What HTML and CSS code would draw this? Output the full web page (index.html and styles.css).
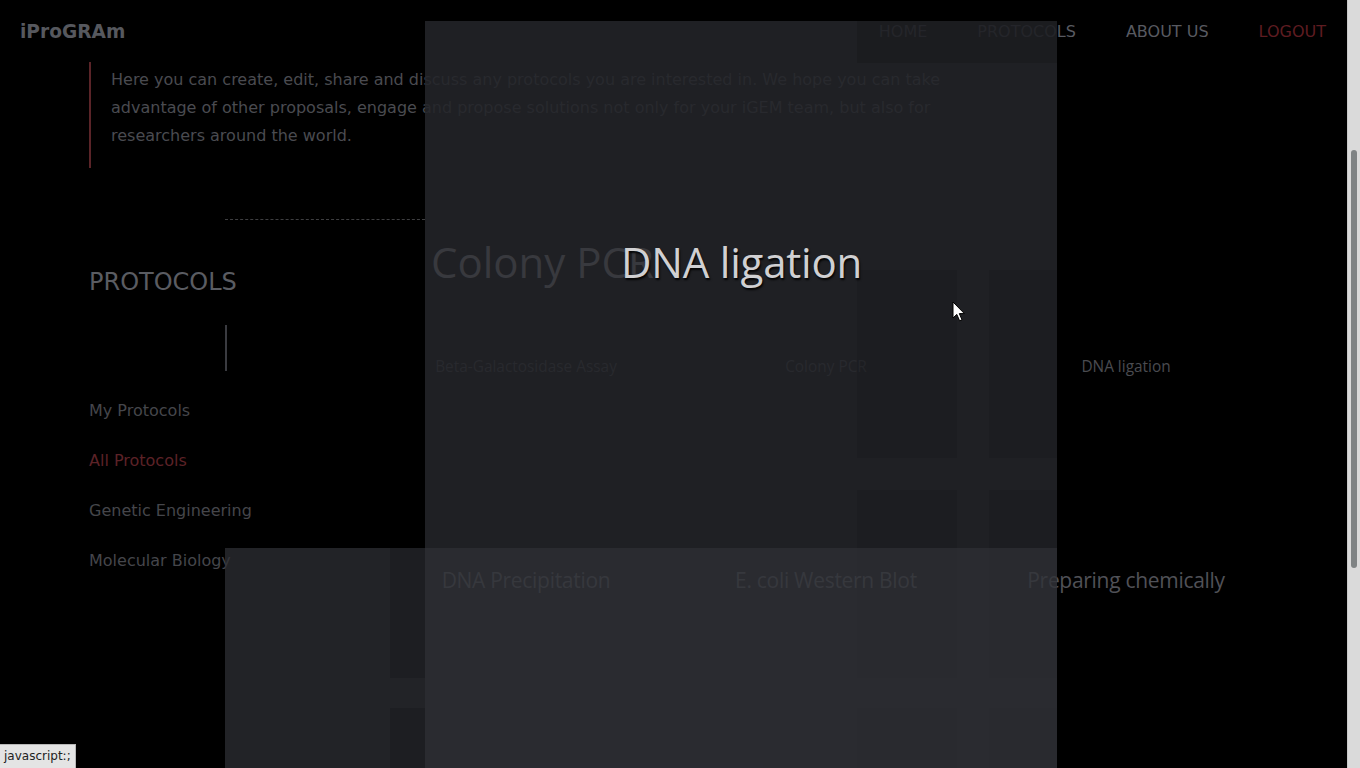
FILE: index.html
```html
<!DOCTYPE html>
<html lang="en">
<head>
<meta charset="utf-8">
<title>iProGRAm - Protocols</title>
<link rel="stylesheet" href="styles.css">
</head>
<body>
<div class="window">
  <div class="page">
    <header class="topbar">
      <div class="logo">iProGRAm</div>
      <nav class="nav">
        <a class="nav-link">HOME</a>
        <a class="nav-link">PROTOCOLS</a>
        <a class="nav-link">ABOUT US</a>
        <a class="nav-link logout">LOGOUT</a>
      </nav>
    </header>

    <blockquote class="intro">Here you can create, edit, share and discuss any protocols you are interested in. We hope you can take advantage of other proposals, engage and propose solutions not only for your iGEM team, but also for researchers around the world.</blockquote>

    <div class="content">
      <aside class="sidebar">
        <h2 class="side-title">PROTOCOLS</h2>
        <ul class="side-list">
          <li class="side-item">My Protocols</li>
          <li class="side-item active">All Protocols</li>
          <li class="side-item">Genetic Engineering</li>
          <li class="side-item">Molecular Biology</li>
        </ul>
      </aside>
      <main class="main">
        <div class="dash"></div>
        <div class="main-body">
          <div class="vline"></div>
          <div class="grid">
            <div class="card"><span class="card-title">Beta-Galactosidase Assay</span></div>
            <div class="card"><span class="card-title">Colony PCR</span></div>
            <div class="card"><span class="card-title">DNA ligation</span></div>
            <div class="card"><span class="card-title big">DNA Precipitation</span></div>
            <div class="card"><span class="card-title big">E. coli Western Blot</span></div>
            <div class="card"><span class="card-title big">Preparing chemically</span></div>
            <div class="card"></div>
            <div class="card"></div>
            <div class="card"></div>
          </div>
        </div>
      </main>
    </div>

    <div class="fx">
      <div class="panel panel-a"></div>
      <div class="panel panel-b"></div>
      <div class="shade s1"></div>
      <div class="shade s2"></div>
      <div class="shade s3"></div>
      <div class="shade s4"></div>
      <div class="shade s5"></div>
      <div class="shade s6"></div>
      <div class="panel panel-c"></div>
      <div class="shade s7"></div>
      <div class="shade s8"></div>
      <div class="ghost-title">Colony PCR</div>
      <div class="hero-title">DNA ligation</div>
      <svg class="cursor" width="14" height="22" viewBox="0 0 14 22">
        <path d="M1 1 L1 17 L4.8 13.4 L7.6 19.8 L10 18.8 L7.3 12.6 L12.4 12.6 Z" fill="#ffffff" stroke="#000000" stroke-width="1" stroke-linejoin="round"/>
      </svg>
    </div>

    <div class="status">javascript:;</div>
  </div>
  <div class="scrollbar"><div class="thumb"></div></div>
</div>
</body>
</html>
```

FILE: styles.css
```css
html, body {
  margin: 0;
  padding: 0;
  background: #000;
}

.window {
  display: flex;
  width: 1360px;
  height: 768px;
  overflow: hidden;
}

.page {
  position: relative;
  width: 1347px;
  height: 768px;
  overflow: hidden;
  background: #000;
  font-family: "DejaVu Sans", Verdana, sans-serif;
  color: #4a4b50;
}

/* header */
.topbar {
  height: 62px;
  display: flex;
  align-items: center;
  justify-content: space-between;
  padding: 0 21px 0 20px;
}

.logo {
  font-weight: bold;
  font-size: 18.6px;
  color: #56585e;
}

.nav {
  display: flex;
  gap: 50px;
}

.nav-link {
  font-size: 16px;
  color: #585a61;
  text-decoration: none;
}

.nav-link.logout {
  color: #5e1c21;
}

/* intro */
.intro {
  margin: 0 0 0 89px;
  width: 836px;
  border-left: 2px solid #5a2428;
  padding: 4px 0 18px 20px;
  font-size: 16px;
  line-height: 28px;
  color: #4a4b50;
}

/* content */
.content {
  display: flex;
  margin-top: 51px;
}

.sidebar {
  width: 136px;
  padding-left: 89px;
  flex-shrink: 0;
}

.side-title {
  margin: 0;
  padding-top: 49px;
  font-size: 24px;
  line-height: 28px;
  font-weight: normal;
  color: #5a5c62;
  white-space: nowrap;
}

.side-list {
  list-style: none;
  margin: 90px 0 0;
  padding: 0;
}

.side-item {
  font-size: 16px;
  line-height: 50px;
  color: #45464b;
  white-space: nowrap;
}

.side-item.active {
  color: #5c2227;
}

.main {
  flex: 1;
}

.dash {
  width: 200px;
  border-top: 1px dashed #3e3e40;
}

.main-body {
  display: flex;
  align-items: flex-start;
}

.vline {
  width: 2px;
  height: 46px;
  margin-top: 105px;
  background: #3a3b40;
  flex-shrink: 0;
}

.grid {
  margin-left: 149px;
  margin-top: 50px;
  display: grid;
  grid-template-columns: repeat(3, 300px);
  grid-auto-rows: 188px;
  row-gap: 31px;
}

.card {
  display: flex;
  align-items: center;
  justify-content: center;
}

.card-title {
  font-family: "Open Sans", sans-serif;
  font-size: 15.4px;
  margin-top: 4px;
  color: #4a4b50;
  white-space: nowrap;
}

.card-title.big {
  position: relative;
  z-index: 2;
  font-size: 21px;
  letter-spacing: -0.3px;
  margin-top: -6px;
  color: #505157;
}

/* overlay effects */
.fx {
  position: absolute;
  inset: 0;
  pointer-events: none;
}

.panel, .shade {
  position: absolute;
  z-index: 1;
}

.panel-a {
  left: 425px;
  top: 21px;
  width: 632px;
  height: 747px;
  background: rgba(35, 36, 41, 0.88);
}

.panel-b {
  left: 857px;
  top: 21px;
  width: 200px;
  height: 42px;
  background: rgba(0, 0, 0, 0.12);
}

.panel-c {
  z-index: 3;
  left: 225px;
  top: 548px;
  width: 832px;
  height: 220px;
  background: rgba(46, 47, 53, 0.74);
}

.shade {
  background: rgba(0, 0, 0, 0.08);
}

.s1 { left: 857px; top: 270px; width: 100px; height: 188px; }
.s2 { left: 989px; top: 270px; width: 68px; height: 188px; }
.s3 { left: 857px; top: 490px; width: 100px; height: 188px; }
.s4 { left: 989px; top: 490px; width: 68px; height: 188px; }
.s5 { left: 857px; top: 708px; width: 100px; height: 60px; z-index: 3; }
.s6 { left: 989px; top: 708px; width: 68px; height: 60px; z-index: 3; }
.s7 { left: 390px; top: 548px; width: 35px; height: 130px; z-index: 3; background: rgba(0, 0, 0, 0.12); }
.s8 { left: 390px; top: 708px; width: 35px; height: 60px; z-index: 3; background: rgba(0, 0, 0, 0.12); }

.ghost-title, .hero-title {
  position: absolute;
  z-index: 4;
  top: 233px;
  font-family: "Open Sans", sans-serif;
  font-size: 42px;
  line-height: 58px;
  white-space: nowrap;
}

.ghost-title {
  left: 431px;
  color: #38393e;
}

.hero-title {
  left: 621px;
  letter-spacing: -0.2px;
  color: #d0d0d2;
  text-shadow: 1px 2px 2px rgba(0, 0, 0, 0.9);
}

.cursor {
  position: absolute;
  z-index: 5;
  left: 952px;
  top: 301px;
}

.status {
  position: absolute;
  z-index: 5;
  left: 0;
  bottom: 0;
  height: 23px;
  padding: 0 4px;
  background: #e4e4e4;
  border-top: 1px solid #b8b8b8;
  border-right: 1px solid #b8b8b8;
  font-family: "DejaVu Sans", sans-serif;
  font-size: 12px;
  line-height: 23px;
  color: #222;
}

/* scrollbar */
.scrollbar {
  width: 12px;
  height: 768px;
  background: #dadada;
  border-left: 1px solid #c9c9c9;
  position: relative;
  flex-shrink: 0;
}

.thumb {
  margin: 150px 0 0 3px;
  width: 6px;
  height: 418px;
  border-radius: 3px;
  background: #7f8384;
}
```
